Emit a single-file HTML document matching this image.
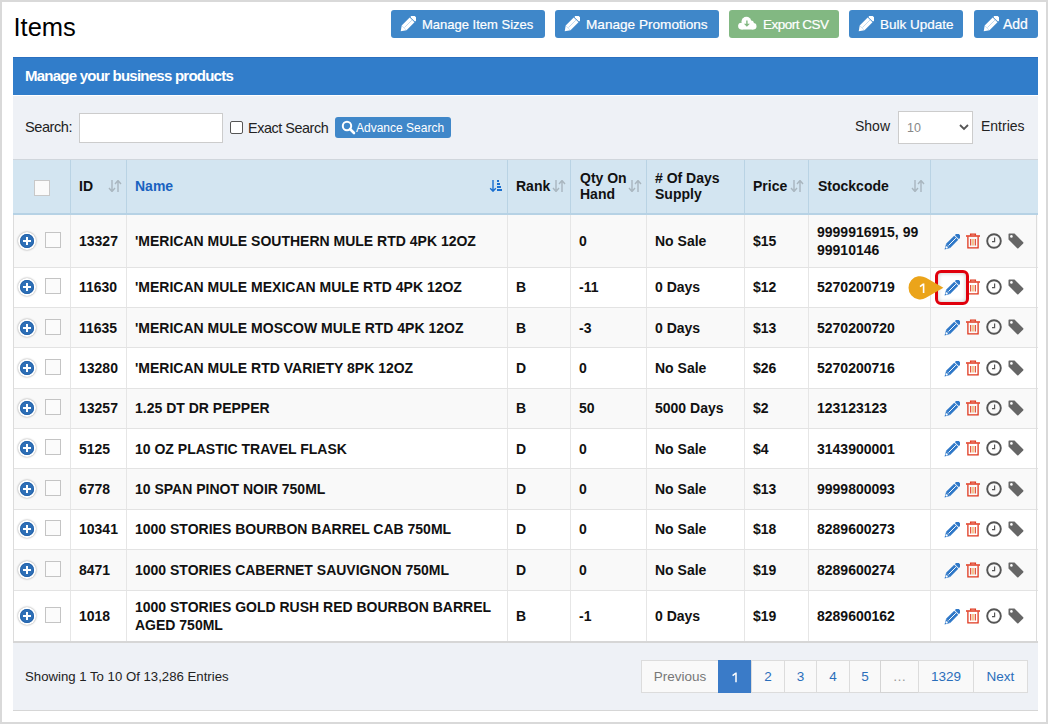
<!DOCTYPE html>
<html><head><meta charset="utf-8">
<style>
*{box-sizing:border-box;margin:0;padding:0}
html,body{width:1048px;height:724px;overflow:hidden;background:#d9d9d9;font-family:"Liberation Sans",sans-serif}
i{display:block;font-style:normal}
.frame{position:absolute;left:2px;top:2px;width:1044px;height:720px;background:#fff}
.abs{position:absolute}
.title{position:absolute;left:13.5px;top:9.5px;font-size:25.5px;color:#000;line-height:34px}
.btn{position:absolute;top:10px;height:28px;background:#3f87c9;border-radius:3px;color:#fff;font-size:14px;line-height:27px;white-space:nowrap}
.btn.green{background:#82b882}
.btn .t{position:absolute;top:1px;-webkit-text-stroke:0.2px #fff}
.btn svg{position:absolute;top:6px}
.heading{position:absolute;left:13px;top:57px;width:1025px;height:38px;background:#317dca;border-top:1px solid #2b70c0;color:#fff;font-weight:bold;font-size:15px}
.heading span{position:absolute;left:12px;top:11px;line-height:16px}
.body{position:absolute;left:13px;top:96px;width:1025px;height:615px;background:#eef1f6;border-bottom:1px solid #d6d6d6}
.lbl{position:absolute;font-size:15px;color:#222;line-height:18px;white-space:nowrap}
.tbl{position:absolute;left:13px;top:159px;width:1025px;height:483px;background:#fff;border:1px solid #dcdcdc}
.hdr{position:absolute;left:13px;top:159px;width:1025px;height:56px;background:#d3e5f1;border-top:1px solid #d0d6dc;border-bottom:2px solid #b6d2e5}
.hv{position:absolute;top:160px;width:1px;height:53px;background:#b9d3e4}
.hc{position:absolute;font-weight:bold;font-size:14px;color:#111;line-height:16px;white-space:nowrap}
.rows{position:absolute;left:13px;top:0}
.row{position:absolute;left:0;width:1025px;border-bottom:1px solid #e3e3e3}
.row:before{content:"";position:absolute;left:0;top:0;bottom:-1px;width:1px;background:#dcdcdc}
.row:after{content:"";position:absolute;right:1px;top:0;bottom:-1px;width:1px;background:#dcdcdc}
.vr{position:absolute;top:0;width:1px;height:100%;background:#e6e6e6}
.cell{position:absolute;top:0;height:100%;display:flex;align-items:center;font-weight:bold;font-size:14px;color:#111;line-height:18px;white-space:nowrap}
.plus{position:absolute;left:5px;top:50%;margin-top:-9px;width:18px;height:18px;border-radius:50%;background:#fff;box-shadow:0 0 2px rgba(0,0,0,.45)}
.plus:after{content:"";position:absolute;left:2px;top:2px;width:14px;height:14px;border-radius:50%;background:#2e6fb6;box-shadow:inset 0 0 0 0.8px #1f5fa8}
.plus:before{content:"";position:absolute;z-index:2;left:4.7px;top:8.2px;width:8.6px;height:1.7px;background:#fff}
.plus b{position:absolute;z-index:2;left:8.15px;top:4.7px;width:1.7px;height:8.6px;background:#fff}
.cb{position:absolute;left:32px;top:50%;margin-top:-9px;width:16px;height:16px;border:1px solid #c4c4c4;background:#fbfbfb}
.act{position:absolute;left:917px;top:50%;margin-top:-8px;width:100px;height:16px}
.act svg{position:absolute;top:0}
.pi{position:absolute;top:660px;height:33px;border:1px solid #dcdcdc;background:#f9f9f9;color:#2a6ebb;font-size:13.5px;line-height:31px;text-align:center}
.pi.act1{background:#3a7bc8;border-color:#3a7bc8;color:#fff;z-index:2}
.badge{position:absolute;left:908px;top:276px;width:24px;height:24px;border-radius:50%;background:#eba41a;color:#fff;font-size:14px;line-height:24px;text-align:center;font-weight:bold}
.badge:after{content:"";position:absolute;left:17px;top:3px;border-left:18px solid #eba41a;border-top:9px solid transparent;border-bottom:9px solid transparent}
.hl{position:absolute;left:935px;top:270px;width:34px;height:35px;border:3.4px solid #e0000c;border-radius:6px;box-shadow:inset 0 0 4px rgba(0,0,0,.25)}

</style></head><body>
<div class="frame"></div>
<div class="title">Items</div>
<div class="btn" style="left:391px;width:154px"><svg style="left:9px" width="16" height="16" viewBox="0 0 16 16"><g transform="rotate(-45 8 8)"><polygon points="-2.3,8 2.5,4.6 2.5,11.4" fill="#fff"/><rect x="2.5" y="4.6" width="11.3" height="6.8" fill="#fff"/><rect x="14.6" y="4.6" width="3.8" height="6.8" rx="1" fill="#fff"/><line x1="3" y1="8" x2="13.5" y2="8" stroke="#9cc3e6" stroke-width="0.6"/></g></svg><span class="t" style="left:31px;font-size:13px">Manage Item Sizes</span></div>
<div class="btn" style="left:555px;width:164px"><svg style="left:9px" width="16" height="16" viewBox="0 0 16 16"><g transform="rotate(-45 8 8)"><polygon points="-2.3,8 2.5,4.6 2.5,11.4" fill="#fff"/><rect x="2.5" y="4.6" width="11.3" height="6.8" fill="#fff"/><rect x="14.6" y="4.6" width="3.8" height="6.8" rx="1" fill="#fff"/><line x1="3" y1="8" x2="13.5" y2="8" stroke="#9cc3e6" stroke-width="0.6"/></g></svg><span class="t" style="left:31px;font-size:13.6px">Manage Promotions</span></div>
<div class="btn green" style="left:729px;width:110px"><svg style="left:9px;top:5.5px" width="19" height="14" viewBox="0 0 19 14"><g fill="#fff"><circle cx="8.4" cy="5.6" r="4.9"/><circle cx="12.9" cy="7.4" r="3"/><circle cx="15.3" cy="10.3" r="3.2"/><circle cx="3.5" cy="10.1" r="3.4"/><rect x="3.5" y="8" width="11.8" height="5.5"/></g><rect x="8.2" y="4.5" width="1.4" height="4" fill="#82b882"/><polygon points="5.9,7.8 11.9,7.8 8.9,10.8" fill="#82b882"/></svg><span class="t" style="left:34px;font-size:13.5px;letter-spacing:-0.5px">Export CSV</span></div>
<div class="btn" style="left:849px;width:114px"><svg style="left:9px" width="16" height="16" viewBox="0 0 16 16"><g transform="rotate(-45 8 8)"><polygon points="-2.3,8 2.5,4.6 2.5,11.4" fill="#fff"/><rect x="2.5" y="4.6" width="11.3" height="6.8" fill="#fff"/><rect x="14.6" y="4.6" width="3.8" height="6.8" rx="1" fill="#fff"/><line x1="3" y1="8" x2="13.5" y2="8" stroke="#9cc3e6" stroke-width="0.6"/></g></svg><span class="t" style="left:31px;font-size:13.5px">Bulk Update</span></div>
<div class="btn" style="left:974px;width:64px"><svg style="left:9px" width="16" height="16" viewBox="0 0 16 16"><g transform="rotate(-45 8 8)"><polygon points="-2.3,8 2.5,4.6 2.5,11.4" fill="#fff"/><rect x="2.5" y="4.6" width="11.3" height="6.8" fill="#fff"/><rect x="14.6" y="4.6" width="3.8" height="6.8" rx="1" fill="#fff"/><line x1="3" y1="8" x2="13.5" y2="8" stroke="#9cc3e6" stroke-width="0.6"/></g></svg><span class="t" style="left:29px;font-size:14px">Add</span></div>

<div class="heading"><span style="font-size:15px;letter-spacing:-0.76px;top:9.5px">Manage your business products</span></div>
<div class="body"></div>

<div class="lbl" style="left:25px;top:118px;font-size:14.6px;letter-spacing:-0.45px">Search:</div>
<div class="abs" style="left:79px;top:113px;width:144px;height:30px;background:#fff;border:1px solid #ccc"></div>
<div class="abs" style="left:230px;top:121px;width:13px;height:13px;background:#fff;border:1px solid #555;border-radius:2px"></div>
<div class="lbl" style="left:248px;top:119px;font-size:14.4px;letter-spacing:-0.45px">Exact Search</div>
<div class="abs" style="left:335px;top:117px;width:116px;height:21px;background:#3f87c9;border-radius:3px"><svg style="position:absolute;left:6px;top:3px" width="15" height="15" viewBox="0 0 15 15"><circle cx="6" cy="6" r="4.2" fill="none" stroke="#fff" stroke-width="2"/><line x1="9" y1="9" x2="13" y2="13" stroke="#fff" stroke-width="2.6" stroke-linecap="round"/></svg><span style="position:absolute;left:21px;top:3px;font-size:12px;line-height:17px;color:#fff;white-space:nowrap">Advance Search</span></div>

<div class="lbl" style="left:855px;top:117px;font-size:14px">Show</div>
<div class="abs" style="left:898px;top:111px;width:75px;height:33px;background:#fff;border:1px solid #ccc"><span style="position:absolute;left:8px;top:8px;font-size:12.5px;line-height:16px;color:#888">10</span><svg style="position:absolute;left:60px;top:12px" width="10" height="7" viewBox="0 0 10 7"><path d="M1 1L5 5 9 1" fill="none" stroke="#555" stroke-width="1.8"/></svg></div>
<div class="lbl" style="left:981px;top:117px;font-size:14px">Entries</div>

<div class="hdr"></div>
<i class="hv" style="left:70px"></i><i class="hv" style="left:126px"></i><i class="hv" style="left:507px"></i><i class="hv" style="left:570px"></i><i class="hv" style="left:646px"></i><i class="hv" style="left:744px"></i><i class="hv" style="left:808px"></i><i class="hv" style="left:930px"></i>
<i class="abs" style="left:34px;top:180px;width:16px;height:16px;background:#fafafa;border:1px solid #c8c8c8"></i>
<div class="hc" style="left:79px;top:178px">ID</div>
<div class="hc" style="left:135px;top:178px;color:#1a62c0">Name</div>
<div class="hc" style="left:516px;top:178px">Rank</div>
<div class="hc" style="left:580px;top:170px">Qty On<br>Hand</div>
<div class="hc" style="left:655px;top:170px">#&nbsp;Of Days<br>Supply</div>
<div class="hc" style="left:753px;top:178px">Price</div>
<div class="hc" style="left:818px;top:178px">Stockcode</div>
<svg class="abs" style="left:108px;top:180px" width="14" height="12" viewBox="0 0 14 12"><path d="M4 0V10M1 8L4 11.5 7 8" fill="none" stroke="#a9b6bf" stroke-width="1.4"/><path d="M10 12V1.5M7 4L10 0.5 13 4" fill="none" stroke="#a9b6bf" stroke-width="1.4"/></svg>
<svg class="abs" style="left:552px;top:180px" width="14" height="12" viewBox="0 0 14 12"><path d="M4 0V10M1 8L4 11.5 7 8" fill="none" stroke="#a9b6bf" stroke-width="1.4"/><path d="M10 12V1.5M7 4L10 0.5 13 4" fill="none" stroke="#a9b6bf" stroke-width="1.4"/></svg>
<svg class="abs" style="left:628px;top:180px" width="14" height="12" viewBox="0 0 14 12"><path d="M4 0V10M1 8L4 11.5 7 8" fill="none" stroke="#a9b6bf" stroke-width="1.4"/><path d="M10 12V1.5M7 4L10 0.5 13 4" fill="none" stroke="#a9b6bf" stroke-width="1.4"/></svg>
<svg class="abs" style="left:790px;top:180px" width="14" height="12" viewBox="0 0 14 12"><path d="M4 0V10M1 8L4 11.5 7 8" fill="none" stroke="#a9b6bf" stroke-width="1.4"/><path d="M10 12V1.5M7 4L10 0.5 13 4" fill="none" stroke="#a9b6bf" stroke-width="1.4"/></svg>
<svg class="abs" style="left:911px;top:180px" width="14" height="12" viewBox="0 0 14 12"><path d="M4 0V10M1 8L4 11.5 7 8" fill="none" stroke="#a9b6bf" stroke-width="1.4"/><path d="M10 12V1.5M7 4L10 0.5 13 4" fill="none" stroke="#a9b6bf" stroke-width="1.4"/></svg>
<svg class="abs" style="left:488px;top:180px" width="15" height="12" viewBox="0 0 15 12"><path d="M5 0V10.5M2.2 8.2L5 11.2 7.8 8.2" fill="none" stroke="#1a6fd0" stroke-width="1.4"/><rect x="9" y="0" width="2" height="2" fill="#1a6fd0"/><rect x="9" y="3" width="3" height="2" fill="#1a6fd0"/><rect x="9" y="6" width="4" height="2" fill="#1a6fd0"/><rect x="9" y="9" width="5" height="2" fill="#1a6fd0"/></svg>

<div class="rows">
<div class="row" style="top:215px;height:53px;background:#f9f9f9">
<i class="vr" style="left:57px"></i>
<i class="vr" style="left:113px"></i>
<i class="vr" style="left:494px"></i>
<i class="vr" style="left:557px"></i>
<i class="vr" style="left:633px"></i>
<i class="vr" style="left:731px"></i>
<i class="vr" style="left:795px"></i>
<i class="vr" style="left:917px"></i>
<i class="plus" style="top:17px;margin:0"><b></b></i><i class="cb" style="top:17px;margin:0"></i>
<div class="cell" style="left:66px;top:17px;height:auto;display:block">13327</div>
<div class="cell" style="left:122px;top:17px;height:auto;display:block">'MERICAN MULE SOUTHERN MULE RTD 4PK 12OZ</div>
<div class="cell" style="left:503px;top:17px;height:auto;display:block"></div>
<div class="cell" style="left:566px;top:17px;height:auto;display:block">0</div>
<div class="cell" style="left:642px;top:17px;height:auto;display:block">No Sale</div>
<div class="cell" style="left:740px;top:17px;height:auto;display:block">$15</div>
<div class="cell" style="left:804px;top:8px;height:auto;display:block">9999916915, 99<br>99910146</div>
<div class="act" style="top:18px;margin:0">
<svg style="left:14px;top:1px" width="16" height="16" viewBox="0 0 16 16"><g transform="rotate(-45 8 8)"><polygon points="-2.5,8 2.5,5.1 2.5,10.9" fill="#2f78c8"/><rect x="2.5" y="5.1" width="11.5" height="5.8" fill="#2f78c8"/><rect x="14.8" y="5.1" width="3.7" height="5.8" rx="1" fill="#2f78c8"/><line x1="3" y1="8" x2="13.5" y2="8" stroke="#fff" stroke-width="0.9"/><circle cx="0.4" cy="8" r="1.1" fill="#fff"/></g></svg>
<svg style="left:36px" width="14" height="16" viewBox="0 0 14 16"><path d="M4.6 2.6V1.1h4.8V2.6" fill="none" stroke="#e0391f" stroke-width="1.3"/><line x1="0" y1="3" x2="14" y2="3" stroke="#e0391f" stroke-width="1.5"/><path d="M1.9 3.5V14.8H12.1V3.5" fill="none" stroke="#e0391f" stroke-width="1.3"/><line x1="4.7" y1="6" x2="4.7" y2="12.6" stroke="#e0391f" stroke-width="1.1"/><line x1="7" y1="6" x2="7" y2="12.6" stroke="#ec9a3a" stroke-width="1.1"/><line x1="9.3" y1="6" x2="9.3" y2="12.6" stroke="#e0391f" stroke-width="1.1"/></svg>
<svg style="left:56px;top:-0.5px" width="16" height="16" viewBox="0 0 16 16"><circle cx="8" cy="8" r="6.8" fill="none" stroke="#555" stroke-width="1.9"/><path d="M8.6 4.6V8.6H6" fill="none" stroke="#555" stroke-width="1.2"/></svg>
<svg style="left:78px;top:-0.5px" width="16" height="16" viewBox="0 0 16 16"><path d="M0.5 1.3Q0.5 0.5 1.3 0.5H6.5L15.2 9.2Q15.8 9.8 15.2 10.4L10.4 15.2Q9.8 15.8 9.2 15.2L0.5 6.5Z" fill="#666"/><circle cx="3.4" cy="3.4" r="1.3" fill="#fff"/></svg>
</div>

</div>
<div class="row" style="top:268px;height:40px;background:#fff">
<i class="vr" style="left:57px"></i>
<i class="vr" style="left:113px"></i>
<i class="vr" style="left:494px"></i>
<i class="vr" style="left:557px"></i>
<i class="vr" style="left:633px"></i>
<i class="vr" style="left:731px"></i>
<i class="vr" style="left:795px"></i>
<i class="vr" style="left:917px"></i>
<i class="plus" style="top:10px;margin:0"><b></b></i><i class="cb" style="top:10px;margin:0"></i>
<div class="cell" style="left:66px;top:10px;height:auto;display:block">11630</div>
<div class="cell" style="left:122px;top:10px;height:auto;display:block">'MERICAN MULE MEXICAN MULE RTD 4PK 12OZ</div>
<div class="cell" style="left:503px;top:10px;height:auto;display:block">B</div>
<div class="cell" style="left:566px;top:10px;height:auto;display:block">-11</div>
<div class="cell" style="left:642px;top:10px;height:auto;display:block">0 Days</div>
<div class="cell" style="left:740px;top:10px;height:auto;display:block">$12</div>
<div class="cell" style="left:804px;top:10px;height:auto;display:block">5270200719</div>
<div class="act" style="top:11px;margin:0">
<svg style="left:14px;top:1px" width="16" height="16" viewBox="0 0 16 16"><g transform="rotate(-45 8 8)"><polygon points="-2.5,8 2.5,5.1 2.5,10.9" fill="#2f78c8"/><rect x="2.5" y="5.1" width="11.5" height="5.8" fill="#2f78c8"/><rect x="14.8" y="5.1" width="3.7" height="5.8" rx="1" fill="#2f78c8"/><line x1="3" y1="8" x2="13.5" y2="8" stroke="#fff" stroke-width="0.9"/><circle cx="0.4" cy="8" r="1.1" fill="#fff"/></g></svg>
<svg style="left:36px" width="14" height="16" viewBox="0 0 14 16"><path d="M4.6 2.6V1.1h4.8V2.6" fill="none" stroke="#e0391f" stroke-width="1.3"/><line x1="0" y1="3" x2="14" y2="3" stroke="#e0391f" stroke-width="1.5"/><path d="M1.9 3.5V14.8H12.1V3.5" fill="none" stroke="#e0391f" stroke-width="1.3"/><line x1="4.7" y1="6" x2="4.7" y2="12.6" stroke="#e0391f" stroke-width="1.1"/><line x1="7" y1="6" x2="7" y2="12.6" stroke="#ec9a3a" stroke-width="1.1"/><line x1="9.3" y1="6" x2="9.3" y2="12.6" stroke="#e0391f" stroke-width="1.1"/></svg>
<svg style="left:56px;top:-0.5px" width="16" height="16" viewBox="0 0 16 16"><circle cx="8" cy="8" r="6.8" fill="none" stroke="#555" stroke-width="1.9"/><path d="M8.6 4.6V8.6H6" fill="none" stroke="#555" stroke-width="1.2"/></svg>
<svg style="left:78px;top:-0.5px" width="16" height="16" viewBox="0 0 16 16"><path d="M0.5 1.3Q0.5 0.5 1.3 0.5H6.5L15.2 9.2Q15.8 9.8 15.2 10.4L10.4 15.2Q9.8 15.8 9.2 15.2L0.5 6.5Z" fill="#666"/><circle cx="3.4" cy="3.4" r="1.3" fill="#fff"/></svg>
</div>

</div>
<div class="row" style="top:308px;height:40px;background:#f9f9f9">
<i class="vr" style="left:57px"></i>
<i class="vr" style="left:113px"></i>
<i class="vr" style="left:494px"></i>
<i class="vr" style="left:557px"></i>
<i class="vr" style="left:633px"></i>
<i class="vr" style="left:731px"></i>
<i class="vr" style="left:795px"></i>
<i class="vr" style="left:917px"></i>
<i class="plus" style="top:11px;margin:0"><b></b></i><i class="cb" style="top:11px;margin:0"></i>
<div class="cell" style="left:66px;top:11px;height:auto;display:block">11635</div>
<div class="cell" style="left:122px;top:11px;height:auto;display:block">'MERICAN MULE MOSCOW MULE RTD 4PK 12OZ</div>
<div class="cell" style="left:503px;top:11px;height:auto;display:block">B</div>
<div class="cell" style="left:566px;top:11px;height:auto;display:block">-3</div>
<div class="cell" style="left:642px;top:11px;height:auto;display:block">0 Days</div>
<div class="cell" style="left:740px;top:11px;height:auto;display:block">$13</div>
<div class="cell" style="left:804px;top:11px;height:auto;display:block">5270200720</div>
<div class="act" style="top:11px;margin:0">
<svg style="left:14px;top:1px" width="16" height="16" viewBox="0 0 16 16"><g transform="rotate(-45 8 8)"><polygon points="-2.5,8 2.5,5.1 2.5,10.9" fill="#2f78c8"/><rect x="2.5" y="5.1" width="11.5" height="5.8" fill="#2f78c8"/><rect x="14.8" y="5.1" width="3.7" height="5.8" rx="1" fill="#2f78c8"/><line x1="3" y1="8" x2="13.5" y2="8" stroke="#fff" stroke-width="0.9"/><circle cx="0.4" cy="8" r="1.1" fill="#fff"/></g></svg>
<svg style="left:36px" width="14" height="16" viewBox="0 0 14 16"><path d="M4.6 2.6V1.1h4.8V2.6" fill="none" stroke="#e0391f" stroke-width="1.3"/><line x1="0" y1="3" x2="14" y2="3" stroke="#e0391f" stroke-width="1.5"/><path d="M1.9 3.5V14.8H12.1V3.5" fill="none" stroke="#e0391f" stroke-width="1.3"/><line x1="4.7" y1="6" x2="4.7" y2="12.6" stroke="#e0391f" stroke-width="1.1"/><line x1="7" y1="6" x2="7" y2="12.6" stroke="#ec9a3a" stroke-width="1.1"/><line x1="9.3" y1="6" x2="9.3" y2="12.6" stroke="#e0391f" stroke-width="1.1"/></svg>
<svg style="left:56px;top:-0.5px" width="16" height="16" viewBox="0 0 16 16"><circle cx="8" cy="8" r="6.8" fill="none" stroke="#555" stroke-width="1.9"/><path d="M8.6 4.6V8.6H6" fill="none" stroke="#555" stroke-width="1.2"/></svg>
<svg style="left:78px;top:-0.5px" width="16" height="16" viewBox="0 0 16 16"><path d="M0.5 1.3Q0.5 0.5 1.3 0.5H6.5L15.2 9.2Q15.8 9.8 15.2 10.4L10.4 15.2Q9.8 15.8 9.2 15.2L0.5 6.5Z" fill="#666"/><circle cx="3.4" cy="3.4" r="1.3" fill="#fff"/></svg>
</div>

</div>
<div class="row" style="top:348px;height:41px;background:#fff">
<i class="vr" style="left:57px"></i>
<i class="vr" style="left:113px"></i>
<i class="vr" style="left:494px"></i>
<i class="vr" style="left:557px"></i>
<i class="vr" style="left:633px"></i>
<i class="vr" style="left:731px"></i>
<i class="vr" style="left:795px"></i>
<i class="vr" style="left:917px"></i>
<i class="plus" style="top:11px;margin:0"><b></b></i><i class="cb" style="top:11px;margin:0"></i>
<div class="cell" style="left:66px;top:11px;height:auto;display:block">13280</div>
<div class="cell" style="left:122px;top:11px;height:auto;display:block">'MERICAN MULE RTD VARIETY 8PK 12OZ</div>
<div class="cell" style="left:503px;top:11px;height:auto;display:block">D</div>
<div class="cell" style="left:566px;top:11px;height:auto;display:block">0</div>
<div class="cell" style="left:642px;top:11px;height:auto;display:block">No Sale</div>
<div class="cell" style="left:740px;top:11px;height:auto;display:block">$26</div>
<div class="cell" style="left:804px;top:11px;height:auto;display:block">5270200716</div>
<div class="act" style="top:12px;margin:0">
<svg style="left:14px;top:1px" width="16" height="16" viewBox="0 0 16 16"><g transform="rotate(-45 8 8)"><polygon points="-2.5,8 2.5,5.1 2.5,10.9" fill="#2f78c8"/><rect x="2.5" y="5.1" width="11.5" height="5.8" fill="#2f78c8"/><rect x="14.8" y="5.1" width="3.7" height="5.8" rx="1" fill="#2f78c8"/><line x1="3" y1="8" x2="13.5" y2="8" stroke="#fff" stroke-width="0.9"/><circle cx="0.4" cy="8" r="1.1" fill="#fff"/></g></svg>
<svg style="left:36px" width="14" height="16" viewBox="0 0 14 16"><path d="M4.6 2.6V1.1h4.8V2.6" fill="none" stroke="#e0391f" stroke-width="1.3"/><line x1="0" y1="3" x2="14" y2="3" stroke="#e0391f" stroke-width="1.5"/><path d="M1.9 3.5V14.8H12.1V3.5" fill="none" stroke="#e0391f" stroke-width="1.3"/><line x1="4.7" y1="6" x2="4.7" y2="12.6" stroke="#e0391f" stroke-width="1.1"/><line x1="7" y1="6" x2="7" y2="12.6" stroke="#ec9a3a" stroke-width="1.1"/><line x1="9.3" y1="6" x2="9.3" y2="12.6" stroke="#e0391f" stroke-width="1.1"/></svg>
<svg style="left:56px;top:-0.5px" width="16" height="16" viewBox="0 0 16 16"><circle cx="8" cy="8" r="6.8" fill="none" stroke="#555" stroke-width="1.9"/><path d="M8.6 4.6V8.6H6" fill="none" stroke="#555" stroke-width="1.2"/></svg>
<svg style="left:78px;top:-0.5px" width="16" height="16" viewBox="0 0 16 16"><path d="M0.5 1.3Q0.5 0.5 1.3 0.5H6.5L15.2 9.2Q15.8 9.8 15.2 10.4L10.4 15.2Q9.8 15.8 9.2 15.2L0.5 6.5Z" fill="#666"/><circle cx="3.4" cy="3.4" r="1.3" fill="#fff"/></svg>
</div>

</div>
<div class="row" style="top:389px;height:40px;background:#f9f9f9">
<i class="vr" style="left:57px"></i>
<i class="vr" style="left:113px"></i>
<i class="vr" style="left:494px"></i>
<i class="vr" style="left:557px"></i>
<i class="vr" style="left:633px"></i>
<i class="vr" style="left:731px"></i>
<i class="vr" style="left:795px"></i>
<i class="vr" style="left:917px"></i>
<i class="plus" style="top:10px;margin:0"><b></b></i><i class="cb" style="top:10px;margin:0"></i>
<div class="cell" style="left:66px;top:10px;height:auto;display:block">13257</div>
<div class="cell" style="left:122px;top:10px;height:auto;display:block">1.25 DT DR PEPPER</div>
<div class="cell" style="left:503px;top:10px;height:auto;display:block">B</div>
<div class="cell" style="left:566px;top:10px;height:auto;display:block">50</div>
<div class="cell" style="left:642px;top:10px;height:auto;display:block">5000 Days</div>
<div class="cell" style="left:740px;top:10px;height:auto;display:block">$2</div>
<div class="cell" style="left:804px;top:10px;height:auto;display:block">123123123</div>
<div class="act" style="top:11px;margin:0">
<svg style="left:14px;top:1px" width="16" height="16" viewBox="0 0 16 16"><g transform="rotate(-45 8 8)"><polygon points="-2.5,8 2.5,5.1 2.5,10.9" fill="#2f78c8"/><rect x="2.5" y="5.1" width="11.5" height="5.8" fill="#2f78c8"/><rect x="14.8" y="5.1" width="3.7" height="5.8" rx="1" fill="#2f78c8"/><line x1="3" y1="8" x2="13.5" y2="8" stroke="#fff" stroke-width="0.9"/><circle cx="0.4" cy="8" r="1.1" fill="#fff"/></g></svg>
<svg style="left:36px" width="14" height="16" viewBox="0 0 14 16"><path d="M4.6 2.6V1.1h4.8V2.6" fill="none" stroke="#e0391f" stroke-width="1.3"/><line x1="0" y1="3" x2="14" y2="3" stroke="#e0391f" stroke-width="1.5"/><path d="M1.9 3.5V14.8H12.1V3.5" fill="none" stroke="#e0391f" stroke-width="1.3"/><line x1="4.7" y1="6" x2="4.7" y2="12.6" stroke="#e0391f" stroke-width="1.1"/><line x1="7" y1="6" x2="7" y2="12.6" stroke="#ec9a3a" stroke-width="1.1"/><line x1="9.3" y1="6" x2="9.3" y2="12.6" stroke="#e0391f" stroke-width="1.1"/></svg>
<svg style="left:56px;top:-0.5px" width="16" height="16" viewBox="0 0 16 16"><circle cx="8" cy="8" r="6.8" fill="none" stroke="#555" stroke-width="1.9"/><path d="M8.6 4.6V8.6H6" fill="none" stroke="#555" stroke-width="1.2"/></svg>
<svg style="left:78px;top:-0.5px" width="16" height="16" viewBox="0 0 16 16"><path d="M0.5 1.3Q0.5 0.5 1.3 0.5H6.5L15.2 9.2Q15.8 9.8 15.2 10.4L10.4 15.2Q9.8 15.8 9.2 15.2L0.5 6.5Z" fill="#666"/><circle cx="3.4" cy="3.4" r="1.3" fill="#fff"/></svg>
</div>

</div>
<div class="row" style="top:429px;height:40px;background:#fff">
<i class="vr" style="left:57px"></i>
<i class="vr" style="left:113px"></i>
<i class="vr" style="left:494px"></i>
<i class="vr" style="left:557px"></i>
<i class="vr" style="left:633px"></i>
<i class="vr" style="left:731px"></i>
<i class="vr" style="left:795px"></i>
<i class="vr" style="left:917px"></i>
<i class="plus" style="top:10px;margin:0"><b></b></i><i class="cb" style="top:10px;margin:0"></i>
<div class="cell" style="left:66px;top:11px;height:auto;display:block">5125</div>
<div class="cell" style="left:122px;top:11px;height:auto;display:block">10 OZ PLASTIC TRAVEL FLASK</div>
<div class="cell" style="left:503px;top:11px;height:auto;display:block">D</div>
<div class="cell" style="left:566px;top:11px;height:auto;display:block">0</div>
<div class="cell" style="left:642px;top:11px;height:auto;display:block">No Sale</div>
<div class="cell" style="left:740px;top:11px;height:auto;display:block">$4</div>
<div class="cell" style="left:804px;top:11px;height:auto;display:block">3143900001</div>
<div class="act" style="top:11px;margin:0">
<svg style="left:14px;top:1px" width="16" height="16" viewBox="0 0 16 16"><g transform="rotate(-45 8 8)"><polygon points="-2.5,8 2.5,5.1 2.5,10.9" fill="#2f78c8"/><rect x="2.5" y="5.1" width="11.5" height="5.8" fill="#2f78c8"/><rect x="14.8" y="5.1" width="3.7" height="5.8" rx="1" fill="#2f78c8"/><line x1="3" y1="8" x2="13.5" y2="8" stroke="#fff" stroke-width="0.9"/><circle cx="0.4" cy="8" r="1.1" fill="#fff"/></g></svg>
<svg style="left:36px" width="14" height="16" viewBox="0 0 14 16"><path d="M4.6 2.6V1.1h4.8V2.6" fill="none" stroke="#e0391f" stroke-width="1.3"/><line x1="0" y1="3" x2="14" y2="3" stroke="#e0391f" stroke-width="1.5"/><path d="M1.9 3.5V14.8H12.1V3.5" fill="none" stroke="#e0391f" stroke-width="1.3"/><line x1="4.7" y1="6" x2="4.7" y2="12.6" stroke="#e0391f" stroke-width="1.1"/><line x1="7" y1="6" x2="7" y2="12.6" stroke="#ec9a3a" stroke-width="1.1"/><line x1="9.3" y1="6" x2="9.3" y2="12.6" stroke="#e0391f" stroke-width="1.1"/></svg>
<svg style="left:56px;top:-0.5px" width="16" height="16" viewBox="0 0 16 16"><circle cx="8" cy="8" r="6.8" fill="none" stroke="#555" stroke-width="1.9"/><path d="M8.6 4.6V8.6H6" fill="none" stroke="#555" stroke-width="1.2"/></svg>
<svg style="left:78px;top:-0.5px" width="16" height="16" viewBox="0 0 16 16"><path d="M0.5 1.3Q0.5 0.5 1.3 0.5H6.5L15.2 9.2Q15.8 9.8 15.2 10.4L10.4 15.2Q9.8 15.8 9.2 15.2L0.5 6.5Z" fill="#666"/><circle cx="3.4" cy="3.4" r="1.3" fill="#fff"/></svg>
</div>

</div>
<div class="row" style="top:469px;height:41px;background:#f9f9f9">
<i class="vr" style="left:57px"></i>
<i class="vr" style="left:113px"></i>
<i class="vr" style="left:494px"></i>
<i class="vr" style="left:557px"></i>
<i class="vr" style="left:633px"></i>
<i class="vr" style="left:731px"></i>
<i class="vr" style="left:795px"></i>
<i class="vr" style="left:917px"></i>
<i class="plus" style="top:11px;margin:0"><b></b></i><i class="cb" style="top:11px;margin:0"></i>
<div class="cell" style="left:66px;top:11px;height:auto;display:block">6778</div>
<div class="cell" style="left:122px;top:11px;height:auto;display:block">10 SPAN PINOT NOIR 750ML</div>
<div class="cell" style="left:503px;top:11px;height:auto;display:block">D</div>
<div class="cell" style="left:566px;top:11px;height:auto;display:block">0</div>
<div class="cell" style="left:642px;top:11px;height:auto;display:block">No Sale</div>
<div class="cell" style="left:740px;top:11px;height:auto;display:block">$13</div>
<div class="cell" style="left:804px;top:11px;height:auto;display:block">9999800093</div>
<div class="act" style="top:12px;margin:0">
<svg style="left:14px;top:1px" width="16" height="16" viewBox="0 0 16 16"><g transform="rotate(-45 8 8)"><polygon points="-2.5,8 2.5,5.1 2.5,10.9" fill="#2f78c8"/><rect x="2.5" y="5.1" width="11.5" height="5.8" fill="#2f78c8"/><rect x="14.8" y="5.1" width="3.7" height="5.8" rx="1" fill="#2f78c8"/><line x1="3" y1="8" x2="13.5" y2="8" stroke="#fff" stroke-width="0.9"/><circle cx="0.4" cy="8" r="1.1" fill="#fff"/></g></svg>
<svg style="left:36px" width="14" height="16" viewBox="0 0 14 16"><path d="M4.6 2.6V1.1h4.8V2.6" fill="none" stroke="#e0391f" stroke-width="1.3"/><line x1="0" y1="3" x2="14" y2="3" stroke="#e0391f" stroke-width="1.5"/><path d="M1.9 3.5V14.8H12.1V3.5" fill="none" stroke="#e0391f" stroke-width="1.3"/><line x1="4.7" y1="6" x2="4.7" y2="12.6" stroke="#e0391f" stroke-width="1.1"/><line x1="7" y1="6" x2="7" y2="12.6" stroke="#ec9a3a" stroke-width="1.1"/><line x1="9.3" y1="6" x2="9.3" y2="12.6" stroke="#e0391f" stroke-width="1.1"/></svg>
<svg style="left:56px;top:-0.5px" width="16" height="16" viewBox="0 0 16 16"><circle cx="8" cy="8" r="6.8" fill="none" stroke="#555" stroke-width="1.9"/><path d="M8.6 4.6V8.6H6" fill="none" stroke="#555" stroke-width="1.2"/></svg>
<svg style="left:78px;top:-0.5px" width="16" height="16" viewBox="0 0 16 16"><path d="M0.5 1.3Q0.5 0.5 1.3 0.5H6.5L15.2 9.2Q15.8 9.8 15.2 10.4L10.4 15.2Q9.8 15.8 9.2 15.2L0.5 6.5Z" fill="#666"/><circle cx="3.4" cy="3.4" r="1.3" fill="#fff"/></svg>
</div>

</div>
<div class="row" style="top:510px;height:40px;background:#fff">
<i class="vr" style="left:57px"></i>
<i class="vr" style="left:113px"></i>
<i class="vr" style="left:494px"></i>
<i class="vr" style="left:557px"></i>
<i class="vr" style="left:633px"></i>
<i class="vr" style="left:731px"></i>
<i class="vr" style="left:795px"></i>
<i class="vr" style="left:917px"></i>
<i class="plus" style="top:10px;margin:0"><b></b></i><i class="cb" style="top:10px;margin:0"></i>
<div class="cell" style="left:66px;top:10px;height:auto;display:block">10341</div>
<div class="cell" style="left:122px;top:10px;height:auto;display:block">1000 STORIES BOURBON BARREL CAB 750ML</div>
<div class="cell" style="left:503px;top:10px;height:auto;display:block">D</div>
<div class="cell" style="left:566px;top:10px;height:auto;display:block">0</div>
<div class="cell" style="left:642px;top:10px;height:auto;display:block">No Sale</div>
<div class="cell" style="left:740px;top:10px;height:auto;display:block">$18</div>
<div class="cell" style="left:804px;top:10px;height:auto;display:block">8289600273</div>
<div class="act" style="top:11px;margin:0">
<svg style="left:14px;top:1px" width="16" height="16" viewBox="0 0 16 16"><g transform="rotate(-45 8 8)"><polygon points="-2.5,8 2.5,5.1 2.5,10.9" fill="#2f78c8"/><rect x="2.5" y="5.1" width="11.5" height="5.8" fill="#2f78c8"/><rect x="14.8" y="5.1" width="3.7" height="5.8" rx="1" fill="#2f78c8"/><line x1="3" y1="8" x2="13.5" y2="8" stroke="#fff" stroke-width="0.9"/><circle cx="0.4" cy="8" r="1.1" fill="#fff"/></g></svg>
<svg style="left:36px" width="14" height="16" viewBox="0 0 14 16"><path d="M4.6 2.6V1.1h4.8V2.6" fill="none" stroke="#e0391f" stroke-width="1.3"/><line x1="0" y1="3" x2="14" y2="3" stroke="#e0391f" stroke-width="1.5"/><path d="M1.9 3.5V14.8H12.1V3.5" fill="none" stroke="#e0391f" stroke-width="1.3"/><line x1="4.7" y1="6" x2="4.7" y2="12.6" stroke="#e0391f" stroke-width="1.1"/><line x1="7" y1="6" x2="7" y2="12.6" stroke="#ec9a3a" stroke-width="1.1"/><line x1="9.3" y1="6" x2="9.3" y2="12.6" stroke="#e0391f" stroke-width="1.1"/></svg>
<svg style="left:56px;top:-0.5px" width="16" height="16" viewBox="0 0 16 16"><circle cx="8" cy="8" r="6.8" fill="none" stroke="#555" stroke-width="1.9"/><path d="M8.6 4.6V8.6H6" fill="none" stroke="#555" stroke-width="1.2"/></svg>
<svg style="left:78px;top:-0.5px" width="16" height="16" viewBox="0 0 16 16"><path d="M0.5 1.3Q0.5 0.5 1.3 0.5H6.5L15.2 9.2Q15.8 9.8 15.2 10.4L10.4 15.2Q9.8 15.8 9.2 15.2L0.5 6.5Z" fill="#666"/><circle cx="3.4" cy="3.4" r="1.3" fill="#fff"/></svg>
</div>

</div>
<div class="row" style="top:550px;height:41px;background:#f9f9f9">
<i class="vr" style="left:57px"></i>
<i class="vr" style="left:113px"></i>
<i class="vr" style="left:494px"></i>
<i class="vr" style="left:557px"></i>
<i class="vr" style="left:633px"></i>
<i class="vr" style="left:731px"></i>
<i class="vr" style="left:795px"></i>
<i class="vr" style="left:917px"></i>
<i class="plus" style="top:11px;margin:0"><b></b></i><i class="cb" style="top:11px;margin:0"></i>
<div class="cell" style="left:66px;top:11px;height:auto;display:block">8471</div>
<div class="cell" style="left:122px;top:11px;height:auto;display:block">1000 STORIES CABERNET SAUVIGNON 750ML</div>
<div class="cell" style="left:503px;top:11px;height:auto;display:block">D</div>
<div class="cell" style="left:566px;top:11px;height:auto;display:block">0</div>
<div class="cell" style="left:642px;top:11px;height:auto;display:block">No Sale</div>
<div class="cell" style="left:740px;top:11px;height:auto;display:block">$19</div>
<div class="cell" style="left:804px;top:11px;height:auto;display:block">8289600274</div>
<div class="act" style="top:12px;margin:0">
<svg style="left:14px;top:1px" width="16" height="16" viewBox="0 0 16 16"><g transform="rotate(-45 8 8)"><polygon points="-2.5,8 2.5,5.1 2.5,10.9" fill="#2f78c8"/><rect x="2.5" y="5.1" width="11.5" height="5.8" fill="#2f78c8"/><rect x="14.8" y="5.1" width="3.7" height="5.8" rx="1" fill="#2f78c8"/><line x1="3" y1="8" x2="13.5" y2="8" stroke="#fff" stroke-width="0.9"/><circle cx="0.4" cy="8" r="1.1" fill="#fff"/></g></svg>
<svg style="left:36px" width="14" height="16" viewBox="0 0 14 16"><path d="M4.6 2.6V1.1h4.8V2.6" fill="none" stroke="#e0391f" stroke-width="1.3"/><line x1="0" y1="3" x2="14" y2="3" stroke="#e0391f" stroke-width="1.5"/><path d="M1.9 3.5V14.8H12.1V3.5" fill="none" stroke="#e0391f" stroke-width="1.3"/><line x1="4.7" y1="6" x2="4.7" y2="12.6" stroke="#e0391f" stroke-width="1.1"/><line x1="7" y1="6" x2="7" y2="12.6" stroke="#ec9a3a" stroke-width="1.1"/><line x1="9.3" y1="6" x2="9.3" y2="12.6" stroke="#e0391f" stroke-width="1.1"/></svg>
<svg style="left:56px;top:-0.5px" width="16" height="16" viewBox="0 0 16 16"><circle cx="8" cy="8" r="6.8" fill="none" stroke="#555" stroke-width="1.9"/><path d="M8.6 4.6V8.6H6" fill="none" stroke="#555" stroke-width="1.2"/></svg>
<svg style="left:78px;top:-0.5px" width="16" height="16" viewBox="0 0 16 16"><path d="M0.5 1.3Q0.5 0.5 1.3 0.5H6.5L15.2 9.2Q15.8 9.8 15.2 10.4L10.4 15.2Q9.8 15.8 9.2 15.2L0.5 6.5Z" fill="#666"/><circle cx="3.4" cy="3.4" r="1.3" fill="#fff"/></svg>
</div>

</div>
<div class="row" style="top:591px;height:51px;background:#fff">
<i class="vr" style="left:57px"></i>
<i class="vr" style="left:113px"></i>
<i class="vr" style="left:494px"></i>
<i class="vr" style="left:557px"></i>
<i class="vr" style="left:633px"></i>
<i class="vr" style="left:731px"></i>
<i class="vr" style="left:795px"></i>
<i class="vr" style="left:917px"></i>
<i class="plus" style="top:16px;margin:0"><b></b></i><i class="cb" style="top:16px;margin:0"></i>
<div class="cell" style="left:66px;top:16px;height:auto;display:block">1018</div>
<div class="cell" style="left:122px;top:7px;height:auto;display:block">1000 STORIES GOLD RUSH RED BOURBON BARREL<br>AGED 750ML</div>
<div class="cell" style="left:503px;top:16px;height:auto;display:block">B</div>
<div class="cell" style="left:566px;top:16px;height:auto;display:block">-1</div>
<div class="cell" style="left:642px;top:16px;height:auto;display:block">0 Days</div>
<div class="cell" style="left:740px;top:16px;height:auto;display:block">$19</div>
<div class="cell" style="left:804px;top:16px;height:auto;display:block">8289600162</div>
<div class="act" style="top:17px;margin:0">
<svg style="left:14px;top:1px" width="16" height="16" viewBox="0 0 16 16"><g transform="rotate(-45 8 8)"><polygon points="-2.5,8 2.5,5.1 2.5,10.9" fill="#2f78c8"/><rect x="2.5" y="5.1" width="11.5" height="5.8" fill="#2f78c8"/><rect x="14.8" y="5.1" width="3.7" height="5.8" rx="1" fill="#2f78c8"/><line x1="3" y1="8" x2="13.5" y2="8" stroke="#fff" stroke-width="0.9"/><circle cx="0.4" cy="8" r="1.1" fill="#fff"/></g></svg>
<svg style="left:36px" width="14" height="16" viewBox="0 0 14 16"><path d="M4.6 2.6V1.1h4.8V2.6" fill="none" stroke="#e0391f" stroke-width="1.3"/><line x1="0" y1="3" x2="14" y2="3" stroke="#e0391f" stroke-width="1.5"/><path d="M1.9 3.5V14.8H12.1V3.5" fill="none" stroke="#e0391f" stroke-width="1.3"/><line x1="4.7" y1="6" x2="4.7" y2="12.6" stroke="#e0391f" stroke-width="1.1"/><line x1="7" y1="6" x2="7" y2="12.6" stroke="#ec9a3a" stroke-width="1.1"/><line x1="9.3" y1="6" x2="9.3" y2="12.6" stroke="#e0391f" stroke-width="1.1"/></svg>
<svg style="left:56px;top:-0.5px" width="16" height="16" viewBox="0 0 16 16"><circle cx="8" cy="8" r="6.8" fill="none" stroke="#555" stroke-width="1.9"/><path d="M8.6 4.6V8.6H6" fill="none" stroke="#555" stroke-width="1.2"/></svg>
<svg style="left:78px;top:-0.5px" width="16" height="16" viewBox="0 0 16 16"><path d="M0.5 1.3Q0.5 0.5 1.3 0.5H6.5L15.2 9.2Q15.8 9.8 15.2 10.4L10.4 15.2Q9.8 15.8 9.2 15.2L0.5 6.5Z" fill="#666"/><circle cx="3.4" cy="3.4" r="1.3" fill="#fff"/></svg>
</div>

</div>
</div>
<i class="abs" style="left:13px;top:641px;width:1025px;height:2px;background:#d6d6d6"></i>
<div class="lbl" style="left:25px;top:668px;font-size:13.2px;color:#222">Showing 1 To 10 Of 13,286 Entries</div>
<div class="pg">
<i class="pi" style="left:641px;width:78px;color:#777;">Previous</i>
<i class="pi act1" style="left:718px;width:33px;"><svg style="position:absolute;left:12px;top:10px" width="8" height="12" viewBox="0 0 8 12"><path d="M5 1.6V11.2M5 2L1.6 4.6" fill="none" stroke="#fff" stroke-width="1.5"/></svg></i>
<i class="pi" style="left:751px;width:34px;">2</i>
<i class="pi" style="left:784px;width:33px;">3</i>
<i class="pi" style="left:816px;width:34px;">4</i>
<i class="pi" style="left:849px;width:32px;">5</i>
<i class="pi" style="left:880px;width:39px;color:#999;border-color:#d4d4d4;">…</i>
<i class="pi" style="left:918px;width:56px;">1329</i>
<i class="pi" style="left:973px;width:55px;">Next</i>
</div>

<div class="hl"></div>
<svg class="abs" style="left:906px;top:274px" width="40" height="28" viewBox="906 274 40 28"><path d="M943.4 287.8L926 277.8A11.6 11.6 0 1 0 926 297.8Z" fill="#eba41a"/><path d="M923.6 283.4V293M923.6 283.9L920 286.6" fill="none" stroke="#fff" stroke-width="1.6"/></svg>

</body></html>
